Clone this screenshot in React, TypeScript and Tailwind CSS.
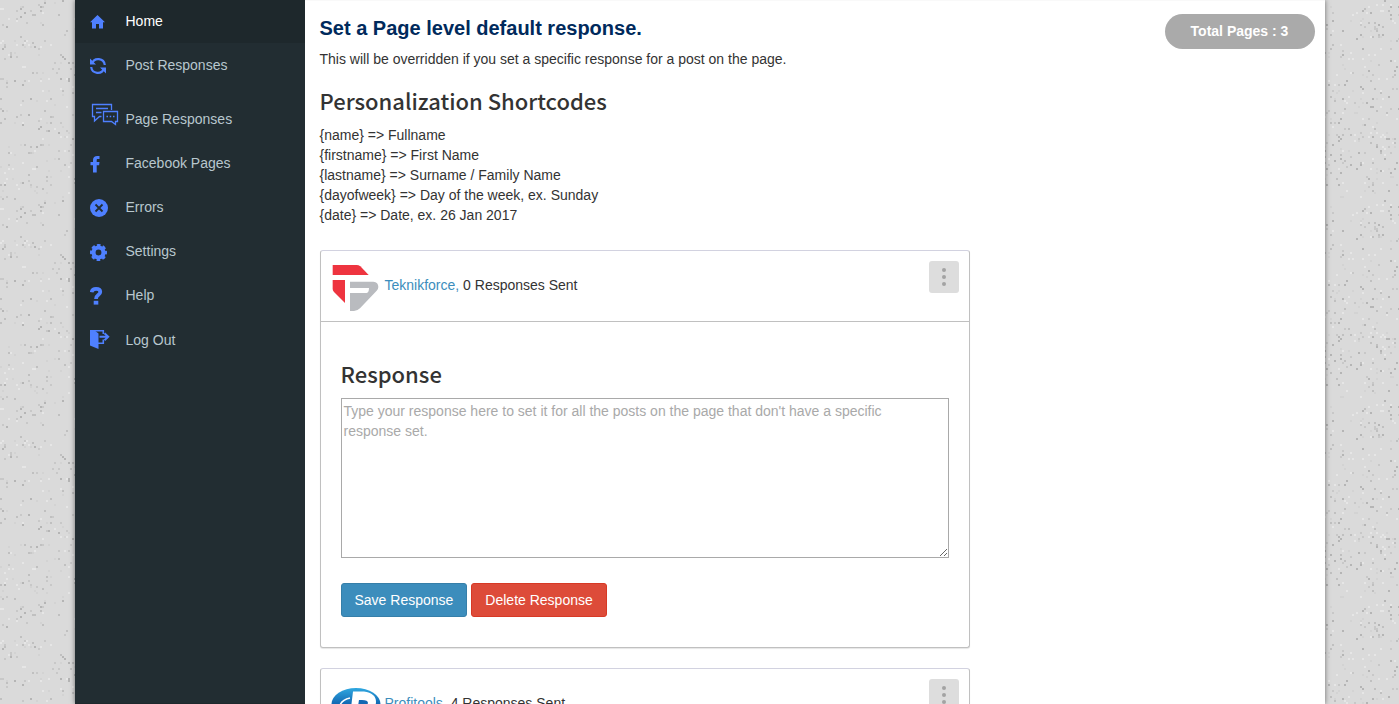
import type { ReactNode } from 'react'

type NavItem = { label: string; icon: ReactNode; active?: boolean }

const navItems: NavItem[] = [
  {
    label: 'Home',
    active: true,
    icon: (
      <svg width="15" height="16" viewBox="0 -2 15 16" fill="currentColor">
        <path d="M7.5 0 15 7.2h-2V13.5H9V9H6v4.5H2V7.2H0Z" />
      </svg>
    ),
  },
  {
    label: 'Post Responses',
    icon: (
      <svg width="16" height="18" viewBox="0 -2 16 18" fill="none" stroke="currentColor" strokeWidth="2.2">
        <path d="M2 5.6A6.6 6.6 0 0 1 14.8 7M14 10.4A6.6 6.6 0 0 1 1.2 9" />
        <path d="M0 .5V6.5H6ZM16 15.5V9.5H10Z" fill="currentColor" stroke="none" />
      </svg>
    ),
  },
  {
    label: 'Page Responses',
    icon: (
      <svg width="29" height="30" viewBox="0 0 29 30" fill="none" stroke="currentColor" strokeWidth="1.3">
        <path d="M21.5 11V5.5H2.5V17.5H4.5V22L9.5 17.5H11.5M6 9.5H18M6 13.5H11.5" />
        <path d="M13.5 12.5H27.5V22.5H25.5V25.5L21.5 22.5H13.5Z" />
        <path d="M16.5 17.5h1.5M19.7 17.5h1.5M23 17.5h1.5" />
      </svg>
    ),
  },
  {
    label: 'Facebook Pages',
    icon: (
      <svg width="10" height="19" viewBox="0 -2 10 19" fill="currentColor">
        <path d="M9.5.1V3.1H8C6.9 3.1 6.7 3.6 6.7 4.4V6H9.5L9.1 9.2H6.7V16.5H3V9.2H.5V6H3V4C3 1.4 4.7 0 7.2 0Z" />
      </svg>
    ),
  },
  {
    label: 'Errors',
    icon: (
      <svg width="18" height="20" viewBox="0 -2 18 20">
        <circle cx="9" cy="9" r="9" fill="currentColor" />
        <path d="M5.5 5.5l7 7M12.5 5.5l-7 7" stroke="#222d32" strokeWidth="1.8" />
      </svg>
    ),
  },
  {
    label: 'Settings',
    icon: (
      <svg width="17" height="19" viewBox="0 -2 17 19">
        <circle cx="8.5" cy="8.5" r="5" fill="none" stroke="currentColor" strokeWidth="4.2" />
        <circle
          cx="8.5"
          cy="8.5"
          r="7.4"
          fill="none"
          stroke="currentColor"
          strokeWidth="2.2"
          strokeDasharray="3.6 2.212"
          strokeDashoffset="1.8"
        />
      </svg>
    ),
  },
  {
    label: 'Help',
    icon: (
      <svg width="13" height="20" viewBox="0 -2 13 20">
        <path
          d="M1.6 5.2C2 2.7 3.6 1.9 6 1.9C8.8 1.9 10.3 3 10.3 5C10.3 8 6 7.6 6 12"
          fill="none"
          stroke="currentColor"
          strokeWidth="3.7"
        />
        <path d="M3.7 13.8h4.6v3.8H3.7Z" fill="currentColor" />
      </svg>
    ),
  },
  {
    label: 'Log Out',
    icon: (
      <svg width="20" height="21" viewBox="0 0 20 21">
        <path d="M0 1H4L8.5 4.5V20L0 16.5Z" fill="currentColor" />
        <path d="M0 1.8H13.3V5M8 14.3H13.3V10.5" fill="none" stroke="currentColor" strokeWidth="1.6" />
        <path d="M9.5 7.7H17M14.5 4.2 18.2 7.7 14.5 11.2" fill="none" stroke="currentColor" strokeWidth="2" />
      </svg>
    ),
  },
]

const shortcodes = [
  '{name} => Fullname',
  '{firstname} => First Name',
  '{lastname} => Surname / Family Name',
  '{dayofweek} => Day of the week, ex. Sunday',
  '{date} => Date, ex. 26 Jan 2017',
]

// small seeded generator, keeps the speckle the same on every render
function makeSpecks(count: number, size: number) {
  let seed = 7
  const next = () => {
    seed = (seed * 16807) % 2147483647
    return seed / 2147483647
  }
  const shades = ['#b5b5b5', '#c0c0c0', '#c8c8c8', '#e6e6e6', '#d3d3d3']
  return Array.from({ length: count }, () => ({
    x: Math.floor((next() * size) / 2) * 2,
    y: Math.floor((next() * size) / 2) * 2,
    fill: shades[Math.floor(next() * shades.length)],
  }))
}

const specks = makeSpecks(640, 200)

function SpeckledBackground() {
  return (
    <svg className="absolute inset-0 -z-10 h-full w-full" aria-hidden="true">
      <defs>
        <pattern id="specks" width="200" height="200" patternUnits="userSpaceOnUse">
          <rect width="200" height="200" fill="#dadada" />
          {specks.map((s, i) => (
            <rect key={i} x={s.x} y={s.y} width="2" height="2" fill={s.fill} />
          ))}
        </pattern>
      </defs>
      <rect width="100%" height="100%" fill="url(#specks)" />
    </svg>
  )
}

function TeknikforceLogo() {
  return (
    <svg width="50" height="50" viewBox="63 63 150 150" aria-hidden="true">
      <path d="M68 75H140Q146 75 151 79L176 105H68Z" fill="#ee343f" />
      <path d="M68 120H105V189L72 156Q68 152 68 146Z" fill="#ee343f" />
      <path
        d="M120 125H190Q205 126 205 141Q205 147 200 152L150 205Q142 213 132 213H120V159H170Q177 157 177 144H120Z"
        fill="#b9bbbf"
      />
    </svg>
  )
}

function ProfitoolsLogo() {
  return (
    <svg width="50" height="50" viewBox="0 0 50 50" aria-hidden="true">
      <defs>
        <linearGradient id="profit" x1="0" y1="0" x2="0" y2="1">
          <stop offset="0" stopColor="#2fa8e0" />
          <stop offset="0.5" stopColor="#1268b3" />
          <stop offset="1" stopColor="#0a4a8c" />
        </linearGradient>
      </defs>
      <ellipse cx="25" cy="25" rx="24.5" ry="16" fill="url(#profit)" />
      <path d="M22 12.5H33Q45 14 45 23Q45 31 31 31H27V37H19Z" fill="#fff" />
      <path d="M28 21H31Q37 21 37 24Q36 27 31 27H27Z" fill="#1268b3" />
      <path d="M8 30Q9 21 19 19" fill="none" stroke="#fff" strokeWidth="1.5" />
    </svg>
  )
}

function PageCard({ name, sent, logo }: { name: string; sent: number; logo: ReactNode }) {
  const fieldId = `response-${name}`
  return (
    <section className="mb-5 max-w-[650px] rounded-[3px] border border-[#c0c0c0] border-t-[#d2d2e0] bg-white shadow-[0_1px_1px_rgba(0,0,0,0.1)]">
      <header className="flex items-start justify-between border-b border-[#c0c0c0] p-[10px]">
        <div className="flex items-center gap-1">
          {logo}
          <p className="pb-[2px]">
            <a href="#" className="text-[#3c8dbc]">{name},</a> {sent} Responses Sent
          </p>
        </div>
        <button
          type="button"
          aria-label={`Options for ${name}`}
          className="flex h-8 w-[30px] flex-col items-center justify-center gap-[3px] rounded-[3px] bg-[#dddddd]"
        >
          <span className="size-1 rounded-full bg-[#a3a3a3]" />
          <span className="size-1 rounded-full bg-[#a3a3a3]" />
          <span className="size-1 rounded-full bg-[#a3a3a3]" />
        </button>
      </header>
      <div className="px-5 pt-[38px] pb-[30px]">
        <h3 className="mb-3 font-['Noto_Sans_CJK_SC',sans-serif] text-[22px] leading-[26px] font-medium">
          <label htmlFor={fieldId}>Response</label>
        </h3>
        <textarea
          id={fieldId}
          className="block h-40 w-full border border-[#a9a9a9] py-[2px] pr-5 pl-[2px] placeholder:text-[#a9a9a9]"
          placeholder="Type your response here to set it for all the posts on the page that don't have a specific response set."
        />
        <div className="mt-[25px] flex gap-1 text-white">
          <button type="button" className="rounded-[3px] border border-[#367fa9] bg-[#3c8dbc] px-[13px] py-[6px]">
            Save Response
          </button>
          <button type="button" className="rounded-[3px] border border-[#d73925] bg-[#dd4b39] px-[13px] py-[6px]">
            Delete Response
          </button>
        </div>
      </div>
    </section>
  )
}

export default function App() {
  return (
    <div className="relative isolate h-screen overflow-hidden font-['Liberation_Sans',Arial,sans-serif] text-sm text-[#333333]">
      <SpeckledBackground />
      <div className="mx-auto flex h-full max-w-[1250px] bg-white shadow-[0_0_5px_rgba(0,0,0,0.5)]">
        <nav className="w-[230px] shrink-0 border-b border-[#1e282c] bg-[#222d32]">
          <ul className="-mt-px">
            {navItems.map((item) => (
              <li key={item.label}>
                <a
                  href="#"
                  className={`flex items-end py-3 pl-[15px] ${item.active ? 'bg-[#1e282c] text-white' : 'text-[#b8c7ce]'}`}
                >
                  <span className="flex min-h-5 w-9 items-center text-[#4f80ff]">{item.icon}</span>
                  {item.label}
                </a>
              </li>
            ))}
          </ul>
        </nav>
        <main className="min-w-0 flex-1 border-t border-[#f9f9f9] pr-[10px] pl-[15px]">
          <div className="flex items-start justify-between pt-[13px]">
            <div>
              <h1 className="text-xl leading-7 font-bold text-[#002a5c]">Set a Page level default response.</h1>
              <p className="mt-[7px]">
                This will be overridden if you set a specific response for a post on the page.
              </p>
            </div>
            <p className="w-[150px] rounded-full bg-[#aaaaaa] text-center leading-[35px] font-bold text-white">
              Total Pages : 3
            </p>
          </div>
          <h2 className="mt-[18px] mb-3 font-['Noto_Sans_CJK_SC',sans-serif] text-[22px] leading-[26px] font-medium">
            Personalization Shortcodes
          </h2>
          <ul className="mb-[25px]">
            {shortcodes.map((line) => (
              <li key={line}>{line}</li>
            ))}
          </ul>
          <PageCard name="Teknikforce" sent={0} logo={<TeknikforceLogo />} />
          <PageCard name="Profitools" sent={4} logo={<ProfitoolsLogo />} />
        </main>
      </div>
    </div>
  )
}
